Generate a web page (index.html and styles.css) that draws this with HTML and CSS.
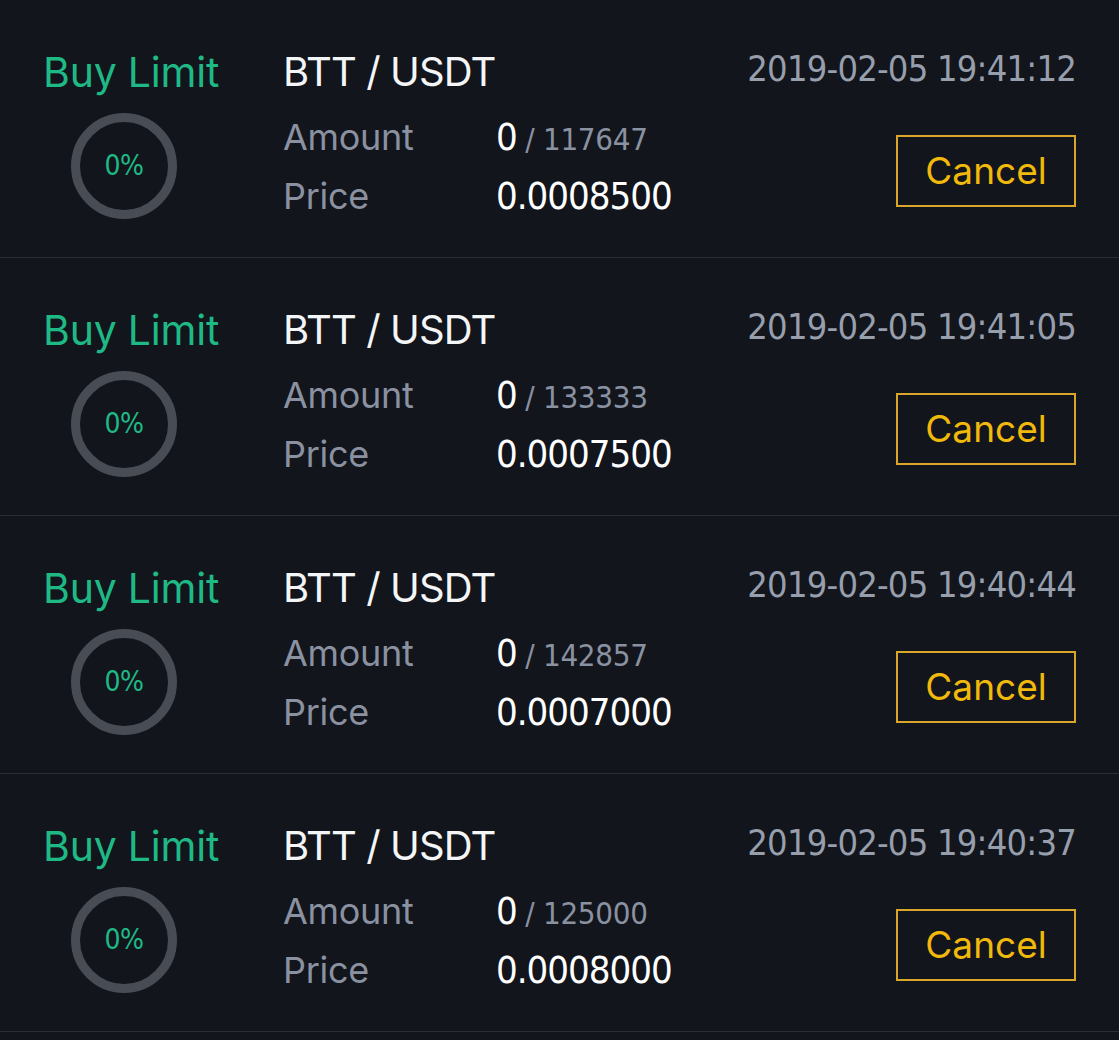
FILE: index.html
```html
<!DOCTYPE html>
<html>
  <head>
    <title>Open Orders</title>
    <link rel="stylesheet" href="styles.css">
  </head>
  <body>
    <div class="orders">

      <div class="order">
        <div class="side">
          <div class="type">Buy Limit</div>
          <div class="ring">
            <svg width="106" height="106" viewBox="0 0 106 106"><circle cx="53" cy="53" r="48.5" fill="none" stroke="#474c55" stroke-width="9"/></svg>
            <span class="pct">0%</span>
          </div>
        </div>
        <div class="info">
          <div class="pair">BTT / USDT</div>
          <div class="line"><span class="label">Amount</span><span class="val">0<span class="total"> / 117647</span></span></div>
          <div class="line"><span class="label">Price</span><span class="val">0.0008500</span></div>
        </div>
        <div class="meta">
          <div class="time">2019-02-05 19:41:12</div>
          <a href="#" class="cancel">Cancel</a>
        </div>
      </div>

      <div class="order">
        <div class="side">
          <div class="type">Buy Limit</div>
          <div class="ring">
            <svg width="106" height="106" viewBox="0 0 106 106"><circle cx="53" cy="53" r="48.5" fill="none" stroke="#474c55" stroke-width="9"/></svg>
            <span class="pct">0%</span>
          </div>
        </div>
        <div class="info">
          <div class="pair">BTT / USDT</div>
          <div class="line"><span class="label">Amount</span><span class="val">0<span class="total"> / 133333</span></span></div>
          <div class="line"><span class="label">Price</span><span class="val">0.0007500</span></div>
        </div>
        <div class="meta">
          <div class="time">2019-02-05 19:41:05</div>
          <a href="#" class="cancel">Cancel</a>
        </div>
      </div>

      <div class="order">
        <div class="side">
          <div class="type">Buy Limit</div>
          <div class="ring">
            <svg width="106" height="106" viewBox="0 0 106 106"><circle cx="53" cy="53" r="48.5" fill="none" stroke="#474c55" stroke-width="9"/></svg>
            <span class="pct">0%</span>
          </div>
        </div>
        <div class="info">
          <div class="pair">BTT / USDT</div>
          <div class="line"><span class="label">Amount</span><span class="val">0<span class="total"> / 142857</span></span></div>
          <div class="line"><span class="label">Price</span><span class="val">0.0007000</span></div>
        </div>
        <div class="meta">
          <div class="time">2019-02-05 19:40:44</div>
          <a href="#" class="cancel">Cancel</a>
        </div>
      </div>

      <div class="order">
        <div class="side">
          <div class="type">Buy Limit</div>
          <div class="ring">
            <svg width="106" height="106" viewBox="0 0 106 106"><circle cx="53" cy="53" r="48.5" fill="none" stroke="#474c55" stroke-width="9"/></svg>
            <span class="pct">0%</span>
          </div>
        </div>
        <div class="info">
          <div class="pair">BTT / USDT</div>
          <div class="line"><span class="label">Amount</span><span class="val">0<span class="total"> / 125000</span></span></div>
          <div class="line"><span class="label">Price</span><span class="val">0.0008000</span></div>
        </div>
        <div class="meta">
          <div class="time">2019-02-05 19:40:37</div>
          <a href="#" class="cancel">Cancel</a>
        </div>
      </div>

    </div>
  </body>
</html>
```

FILE: styles.css
```css
body {
  margin: 0;
  background-color: #12151c;
  font-family: Inter, "Noto Sans", sans-serif;
  color: #f2f3f5;
}
.orders {
  width: 1119px;
}
.order {
  display: flex;
  box-sizing: border-box;
  height: 258px;
  padding: 0 43px;
  border-bottom: 1px solid #2a2e36;
}
.side {
  flex-shrink: 0;
  width: 240px;
  padding-top: 47px;
}
.type {
  color: #1fb985;
  font-size: 41px;
  line-height: 50px;
  letter-spacing: -0.2px;
  white-space: nowrap;
}
.ring {
  position: relative;
  width: 106px;
  height: 106px;
  margin: 16px 0 0 28px;
}
.ring svg {
  display: block;
}
.pct {
  position: absolute;
  left: 0;
  top: 0;
  width: 106px;
  line-height: 106px;
  text-align: center;
  color: #1fb985;
  font-family: "DejaVu Sans Condensed", "DejaVu Sans", sans-serif;
  font-size: 28px;
  letter-spacing: -0.5px;
}
.info {
  flex: 1;
  padding-top: 47px;
}
.pair {
  font-size: 40px;
  line-height: 50px;
  letter-spacing: -0.9px;
  color: #f4f5f7;
  white-space: nowrap;
}
.line {
  display: flex;
  align-items: baseline;
  height: 59px;
  white-space: nowrap;
}
.pair + .line {
  margin-top: 11px;
}
.label {
  flex-shrink: 0;
  width: 213px;
  color: #8a91a1;
  font-size: 36px;
  line-height: 59px;
  letter-spacing: -0.3px;
}
.val {
  font-family: "DejaVu Sans Condensed", "DejaVu Sans", sans-serif;
  font-size: 38px;
  letter-spacing: -1px;
  color: #ffffff;
}
.total {
  font-size: 31px;
  letter-spacing: -0.3px;
  color: #8a91a1;
}
.meta {
  flex-shrink: 0;
  display: flex;
  flex-direction: column;
  align-items: flex-end;
  padding-top: 44px;
}
.time {
  font-family: "DejaVu Sans Condensed", "DejaVu Sans", sans-serif;
  font-size: 36px;
  line-height: 50px;
  letter-spacing: -0.8px;
  color: #979eac;
  white-space: nowrap;
}
.cancel {
  display: block;
  box-sizing: border-box;
  width: 180px;
  height: 72px;
  margin-top: 41px;
  border: 2px solid #d9a62a;
  color: #f0b90b;
  font-size: 37px;
  line-height: 68px;
  text-align: center;
  text-decoration: none;
}
```
